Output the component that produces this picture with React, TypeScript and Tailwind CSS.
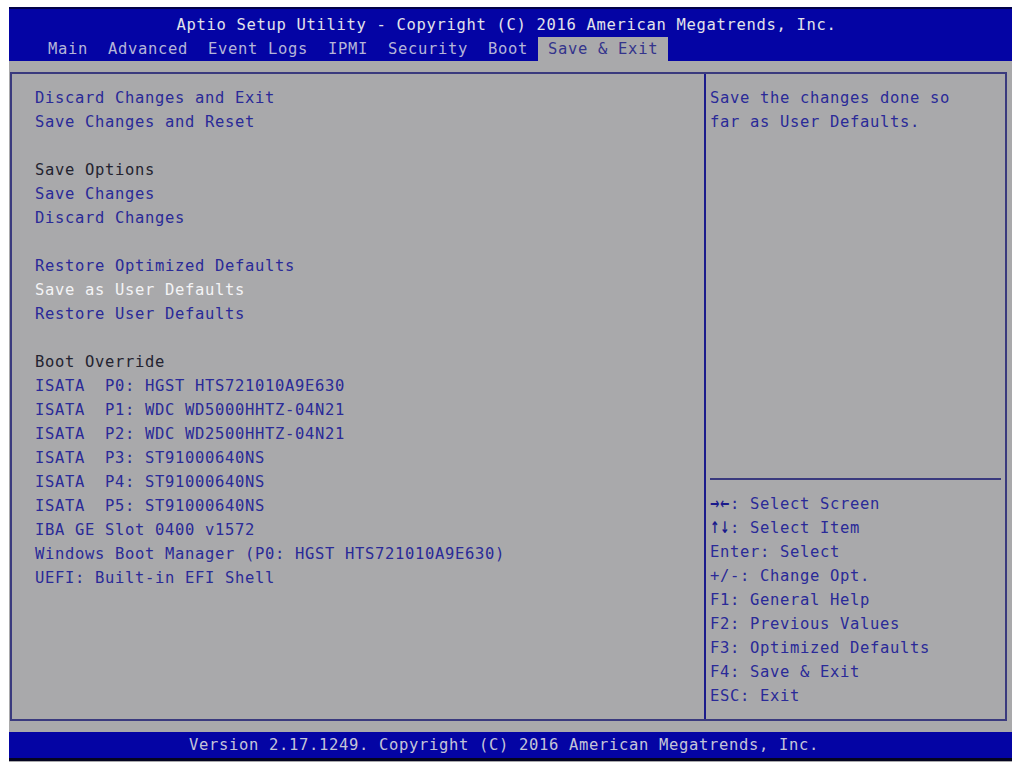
type Line = { text: string; kind: 'link' | 'label' | 'selected' | 'blank' };

const leftLines: Line[] = [
  { text: 'Discard Changes and Exit', kind: 'link' },
  { text: 'Save Changes and Reset', kind: 'link' },
  { text: '', kind: 'blank' },
  { text: 'Save Options', kind: 'label' },
  { text: 'Save Changes', kind: 'link' },
  { text: 'Discard Changes', kind: 'link' },
  { text: '', kind: 'blank' },
  { text: 'Restore Optimized Defaults', kind: 'link' },
  { text: 'Save as User Defaults', kind: 'selected' },
  { text: 'Restore User Defaults', kind: 'link' },
  { text: '', kind: 'blank' },
  { text: 'Boot Override', kind: 'label' },
  { text: 'ISATA  P0: HGST HTS721010A9E630', kind: 'link' },
  { text: 'ISATA  P1: WDC WD5000HHTZ-04N21', kind: 'link' },
  { text: 'ISATA  P2: WDC WD2500HHTZ-04N21', kind: 'link' },
  { text: 'ISATA  P3: ST91000640NS', kind: 'link' },
  { text: 'ISATA  P4: ST91000640NS', kind: 'link' },
  { text: 'ISATA  P5: ST91000640NS', kind: 'link' },
  { text: 'IBA GE Slot 0400 v1572', kind: 'link' },
  { text: 'Windows Boot Manager (P0: HGST HTS721010A9E630)', kind: 'link' },
  { text: 'UEFI: Built-in EFI Shell', kind: 'link' },
];

const tabs = ['Main', 'Advanced', 'Event Logs', 'IPMI', 'Security', 'Boot', 'Save & Exit'];

// first part is the key, drawn as heavier glyphs when it's a pair of arrows
const keys: [string, string, boolean][] = [
  ['→←', ': Select Screen', true],
  ['↑↓', ': Select Item', true],
  ['Enter', ': Select', false],
  ['+/-', ': Change Opt.', false],
  ['F1', ': General Help', false],
  ['F2', ': Previous Values', false],
  ['F3', ': Optimized Defaults', false],
  ['F4', ': Save & Exit', false],
  ['ESC', ': Exit', false],
];

const kindClass = {
  link: 'text-[#2a2a98]',
  label: 'text-[#232330]',
  selected: 'text-[#f4f4f6]',
  blank: '',
};

export default function App() {
  return (
    <div className="w-[1012px] h-[765px] bg-white pt-[7px] pl-[9px] overflow-hidden font-['DejaVu_Sans_Mono',monospace] text-[15.5px] tracking-[0.67px]">
      <div className="w-[1003px] h-[755px] bg-[#a9a9ab] flex flex-col">
        {/* Header */}
        <div className="h-[54px] bg-[#0404a4] border-t-2 border-[#02024a] flex flex-col">
          <div className="h-[28px] pt-[4px] leading-[24px] text-center pr-[8px] text-[#e2e2ea] whitespace-pre">
            Aptio Setup Utility - Copyright (C) 2016 American Megatrends, Inc.
          </div>
          <div className="h-[24px] flex pl-[29px] leading-[24px] whitespace-pre">
            {tabs.map((t) => (
              <span
                key={t}
                className={
                  t === 'Save & Exit'
                    ? 'px-[10px] bg-[#a9a9ab] text-[#34348c]'
                    : 'px-[10px] text-[#b4b4d8]'
                }
              >
                {t}
              </span>
            ))}
          </div>
        </div>

        <div className="h-[11px]" />

        {/* Main panel */}
        <div className="h-[649px] w-[997px] ml-[1px] border-2 border-[#3a3a7e] flex">
          <div className="w-[692px] pl-[23px] pt-[12px] leading-[24px] whitespace-pre">
            {leftLines.map((l, i) => (
              <div key={i} className={`h-[24px] ${kindClass[l.kind]}`}>
                {l.text}
              </div>
            ))}
          </div>
          <div className="w-[2px] bg-[#1c1c8c]" />
          <div className="flex-1 flex flex-col leading-[24px] text-[#2a2a98] whitespace-pre">
            <div className="pl-[4px] pt-[12px]">
              <div>Save the changes done so</div>
              <div>far as User Defaults.</div>
            </div>
            <div className="flex-1" />
            <div className="h-[2px] mx-[4px] bg-[#3a3a7e]" />
            <div className="pl-[4px] pt-[12px] pb-[11px]">
              {keys.map(([k, rest, arrow]) => (
                <div key={k} className="h-[24px] flex">
                  {arrow ? (
                    <span className="w-[20px] flex text-[#1a1a8c]">
                      {k.split('').map((c) => (
                        <span
                          key={c}
                          className="w-[10px] flex justify-center overflow-visible font-['DejaVu_Sans',sans-serif] font-bold text-[16px] tracking-normal"
                        >
                          <span className="inline-block scale-x-[0.7]">{c}</span>
                        </span>
                      ))}
                    </span>
                  ) : (
                    <span>{k}</span>
                  )}
                  <span>{rest}</span>
                </div>
              ))}
            </div>
          </div>
        </div>

        <div className="h-[11px]" />

        {/* Footer */}
        <div className="h-[29px] bg-[#0404a4] border-b-[3px] border-[#050520] text-center pr-[13px] leading-[26px] text-[#c4c4d8] whitespace-pre">
          Version 2.17.1249. Copyright (C) 2016 American Megatrends, Inc.
        </div>
      </div>
    </div>
  );
}
